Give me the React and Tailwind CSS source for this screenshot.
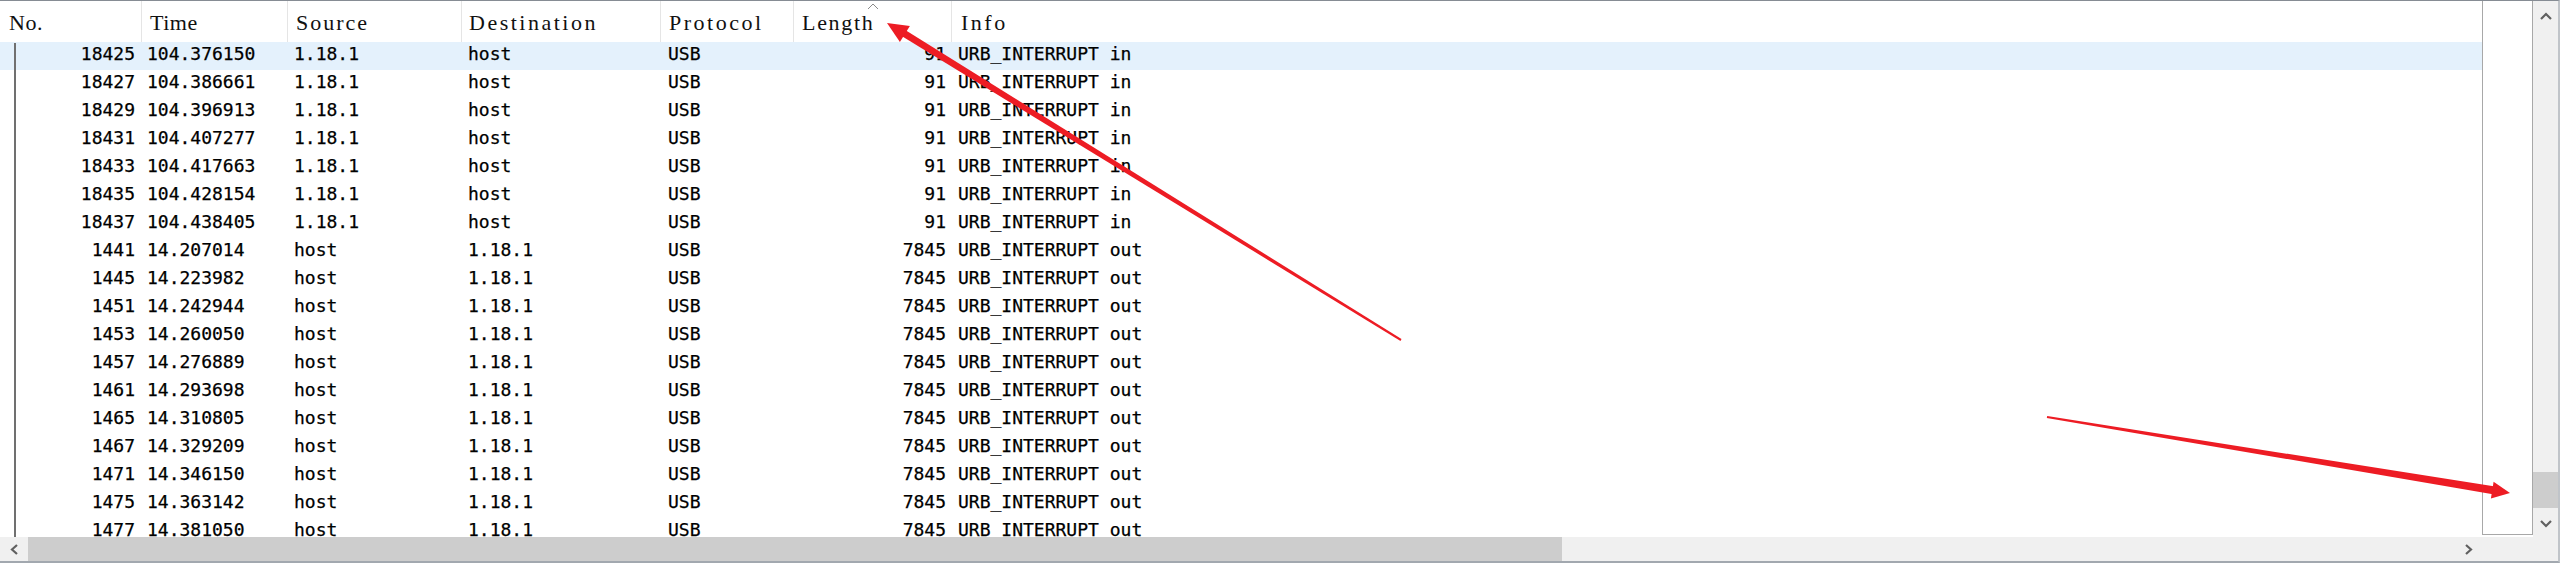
import React from 'react'

const inRows = [
  ['18425', '104.376150'],
  ['18427', '104.386661'],
  ['18429', '104.396913'],
  ['18431', '104.407277'],
  ['18433', '104.417663'],
  ['18435', '104.428154'],
  ['18437', '104.438405'],
]

const outRows = [
  ['1441', '14.207014'],
  ['1445', '14.223982'],
  ['1451', '14.242944'],
  ['1453', '14.260050'],
  ['1457', '14.276889'],
  ['1461', '14.293698'],
  ['1465', '14.310805'],
  ['1467', '14.329209'],
  ['1471', '14.346150'],
  ['1475', '14.363142'],
  ['1477', '14.381050'],
]

const packets = [
  ...inRows.map(([no, time]) => ({ no, time, src: '1.18.1', dst: 'host', proto: 'USB', len: '91', info: 'URB_INTERRUPT in' })),
  ...outRows.map(([no, time]) => ({ no, time, src: 'host', dst: '1.18.1', proto: 'USB', len: '7845', info: 'URB_INTERRUPT out' })),
]

function arrow(tx, ty, px, py, w0, w1, L, hw) {
  const dx = px - tx
  const dy = py - ty
  const len = Math.hypot(dx, dy)
  const ux = dx / len
  const uy = dy / len
  const nx = -uy
  const ny = ux
  const bx = px - ux * L
  const by = py - uy * L
  const sx = px - ux * L * 0.6
  const sy = py - uy * L * 0.6
  const pt = (x, y) => `${x.toFixed(1)},${y.toFixed(1)}`
  const shaft = [
    pt(tx + (nx * w0) / 2, ty + (ny * w0) / 2),
    pt(sx + (nx * w1) / 2, sy + (ny * w1) / 2),
    pt(sx - (nx * w1) / 2, sy - (ny * w1) / 2),
    pt(tx - (nx * w0) / 2, ty - (ny * w0) / 2),
  ].join(' ')
  const head = [pt(px, py), pt(bx + nx * hw, by + ny * hw), pt(bx - nx * hw, by - ny * hw)].join(' ')
  return { shaft, head }
}

function Chevron({ dir }) {
  const pts = {
    up: '1,7 6,2 11,7',
    down: '1,1 6,6 11,1',
  }
  return (
    <svg width="12" height="8" viewBox="0 0 12 8">
      <polyline points={pts[dir]} fill="none" stroke="#606060" strokeWidth="2.2" />
    </svg>
  )
}

function HChevron({ dir }) {
  const pts = dir === 'left' ? '7,1 2,5.5 7,10' : '2,1 7,5.5 2,10'
  return (
    <svg width="9" height="11" viewBox="0 0 9 11">
      <polyline points={pts} fill="none" stroke="#606060" strokeWidth="2.2" />
    </svg>
  )
}

const cols = ['w-[142px]', 'w-[146px]', 'w-[174px]', 'w-[199px]', 'w-[133px]', 'w-[158px]']

export default function App() {
  const a1 = arrow(1401, 340, 887, 23, 2, 7, 21, 9.5)
  const a2 = arrow(2047, 417, 2510, 493, 2, 8, 18, 8.5)

  return (
    <div className="relative w-[2560px] h-[564px] bg-white overflow-hidden">
      <div className="flex flex-col h-[563px] border-t border-t-[#868c94] border-b-2 border-b-[#a2a8af] border-r-2 border-r-[#c0c4c9]">
        <div className="flex h-[536px]">
          {/* packet list */}
          <div className="flex flex-col w-[2482px]">
            <div className="flex h-[41px] text-[22px] leading-[24px] text-[#111] font-['Liberation_Serif',serif]">
              <div className={`${cols[0]} pl-[9px] pt-[10px] border-r border-r-[#e5e5e5] tracking-[0.5px]`}>No.</div>
              <div className={`${cols[1]} pl-[8px] pt-[10px] border-r border-r-[#e5e5e5] tracking-[0.5px]`}>Time</div>
              <div className={`${cols[2]} pl-[8px] pt-[10px] border-r border-r-[#e5e5e5] tracking-[2px]`}>Source</div>
              <div className={`${cols[3]} pl-[7px] pt-[10px] border-r border-r-[#e5e5e5] tracking-[2.5px]`}>Destination</div>
              <div className={`${cols[4]} pl-[8px] pt-[10px] border-r border-r-[#e5e5e5] tracking-[2.5px]`}>Protocol</div>
              <div className={`${cols[5]} relative pl-[8px] pt-[10px] border-r border-r-[#e5e5e5] tracking-[1.7px]`}>
                Length
                <svg className="absolute left-[73px] top-[2px]" width="12" height="7" viewBox="0 0 12 7">
                  <polyline points="1,6 6,1 11,6" fill="none" stroke="#8a8a8a" strokeWidth="1" />
                </svg>
              </div>
              <div className="flex-1 pl-[9px] pt-[10px] tracking-[2.5px]">Info</div>
            </div>
            <div className="relative flex-1 overflow-hidden font-['DejaVu_Sans_Mono',monospace] text-[18px] leading-[24px] text-black [-webkit-text-stroke:0.25px_#000]">
              {packets.map((p, i) => (
                <div key={p.no} className={`flex h-[28px] shrink-0 whitespace-pre ${i === 0 ? 'bg-[#e4f1fc]' : ''}`}>
                  <div className={`${cols[0]} pr-[7px] text-right`}>{p.no}</div>
                  <div className={`${cols[1]} pl-[5px]`}>{p.time}</div>
                  <div className={`${cols[2]} pl-[6px]`}>{p.src}</div>
                  <div className={`${cols[3]} pl-[6px]`}>{p.dst}</div>
                  <div className={`${cols[4]} pl-[7px]`}>{p.proto}</div>
                  <div className={`${cols[5]} pr-[6px] text-right`}>{p.len}</div>
                  <div className="flex-1 pl-[6px]">{p.info}</div>
                </div>
              ))}
              <div className="absolute left-[14px] top-[1px] bottom-0 w-[2px] bg-[#707070]" />
            </div>
          </div>

          {/* packet map */}
          <div className="w-[51px] bg-white">
            <div className="h-[534px] border-l border-r border-b border-[#a8a8a8] bg-white" />
          </div>

          {/* vertical scrollbar */}
          <div className="flex flex-col w-[25px] bg-[#f0f0f0]">
            <div className="h-[30px] flex items-center justify-center">
              <Chevron dir="up" />
            </div>
            <div className="mt-[441px] h-[36px] bg-[#cdcdcd]" />
            <div className="mt-[2px] h-[27px] flex items-center justify-center">
              <Chevron dir="down" />
            </div>
          </div>
        </div>

        {/* horizontal scrollbar */}
        <div className="flex h-[24px] bg-[#f0f0f0]">
          <div className="w-[28px] flex items-center justify-center">
            <HChevron dir="left" />
          </div>
          <div className="w-[1534px] bg-[#cdcdcd]" />
          <div className="flex-1" />
          <div className="w-[27px] flex items-center justify-center">
            <HChevron dir="right" />
          </div>
          <div className="w-[76px]" />
        </div>
      </div>

      {/* annotation arrows */}
      <svg className="absolute inset-0 pointer-events-none" width="2560" height="564" viewBox="0 0 2560 564">
        <polygon points={a1.shaft} fill="#ed1c24" />
        <polygon points={a1.head} fill="#ed1c24" />
        <polygon points={a2.shaft} fill="#ed1c24" />
        <polygon points={a2.head} fill="#ed1c24" />
      </svg>
    </div>
  )
}
